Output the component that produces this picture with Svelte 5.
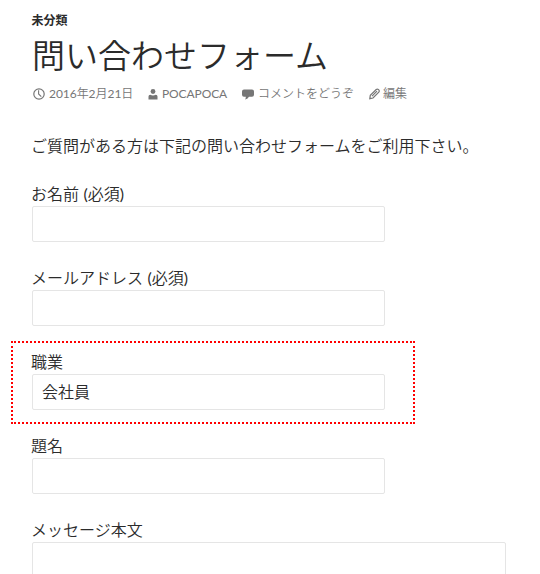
<script>
  const fields = [
    { label: 'お名前', required: true, value: '' },
    { label: 'メールアドレス', required: true, value: '' },
    { label: '職業', value: '会社員', marked: true },
    { label: '題名', value: '' }
  ];
</script>

<main>
  <header>
    <div class="cat">未分類</div>
    <h1>問い合わせフォーム</h1>
    <div class="meta">
      <span class="item date"><svg width="12" height="12" viewBox="0 0 12 12"><circle cx="6" cy="6" r="5.2" fill="none" stroke="#767676" stroke-width="1.2"/><path d="M5.6 2.2V6L8.3 8.6" fill="none" stroke="#767676" stroke-width="1.1"/></svg><span><b>2016</b>年<b>2</b>月<b>21</b>日</span></span>
      <span class="item author"><svg width="10" height="11" viewBox="0 0 10 11"><circle cx="5" cy="2.5" r="2.4" fill="#767676"/><path d="M.5 10.5V7.5Q.5 5.8 2.2 5.8Q5 7 7.8 5.8Q9.5 5.8 9.5 7.5V10.5Z" fill="#767676"/></svg><b>POCAPOCA</b></span>
      <span class="item comment"><svg width="12" height="11" viewBox="0 0 12 11"><path d="M2 .5H10Q12 .5 12 2.5V5.8Q12 7.8 10 7.8H7Q5.5 10.2 3 10.5Q4 9.3 3.8 7.8H2Q0 7.8 0 5.8V2.5Q0 .5 2 .5Z" fill="#767676"/></svg><span>コメントをどうぞ</span></span>
      <span class="item edit"><svg width="11" height="12" viewBox="0 0 11 12"><path d="M.8 10.7L1.3 7.4L7.2 1.5Q8.4.5 9.6 1.7Q10.8 3 9.8 4.2L4 10Z M3 8.2L8 3.2" fill="none" stroke="#767676" stroke-width="1.2"/></svg><span>編集</span></span>
    </div>
  </header>
  <p class="intro">ご質問がある方は下記の問い合わせフォームをご利用下さい。</p>
  <form>
    {#each fields as f}
      <label class:marked={f.marked}><span class="name">{f.label}{#if f.required}{' '}<b>(</b>必須<b>)</b>{/if}</span><input type="text" value={f.value} /></label>
    {/each}
    <label><span class="name">メッセージ本文</span><textarea></textarea></label>
  </form>
</main>

<style>
  :global(body) { background: #fff; overflow: hidden; }
  main { box-sizing: border-box; height: 574px; overflow: hidden; padding: 13px 34px 0 32px; color: #2b2b2b; font: 350 16px/24px Lato, "Noto Sans CJK JP", sans-serif; }
  b { font-weight: 400; }
  .cat { font-size: 12px; font-weight: 700; line-height: 16px; margin-left: -0.5px; }
  h1 { margin: 6px 0 13px; font-size: 33px; line-height: 40px; font-weight: 350; white-space: nowrap; }
  .meta { display: flex; height: 12px; align-items: center; color: #767676; font-size: 12px; line-height: 12px; white-space: nowrap; margin-left: 1px; }
  .item { display: flex; align-items: center; }
  .item svg { flex: none; margin-right: 4px; }
  .date { width: 115px; letter-spacing: -0.05px; }
  .author { width: 94px; letter-spacing: -0.1px; }
  .comment { width: 127px; }
  .edit svg { margin-right: 3px; }
  .intro { margin: 34px 0 24px -1px; white-space: nowrap; }
  label { display: block; height: 60px; margin-bottom: 24px; position: relative; }
  .name { display: block; height: 24px; margin-left: -1px; }
  input, textarea { display: block; box-sizing: border-box; width: 353px; height: 36px; margin: 0; padding: 0 9px 2px; border: 1px solid #e5e5e5; border-radius: 2px; background: #fff; color: #2b2b2b; font: inherit; outline: none; }
  textarea { width: 474px; height: 160px; resize: none; }
  .marked::after { content: ''; position: absolute; left: -21px; top: -9px; width: 400px; height: 79px; border: 2px dotted #f00; }
</style>
